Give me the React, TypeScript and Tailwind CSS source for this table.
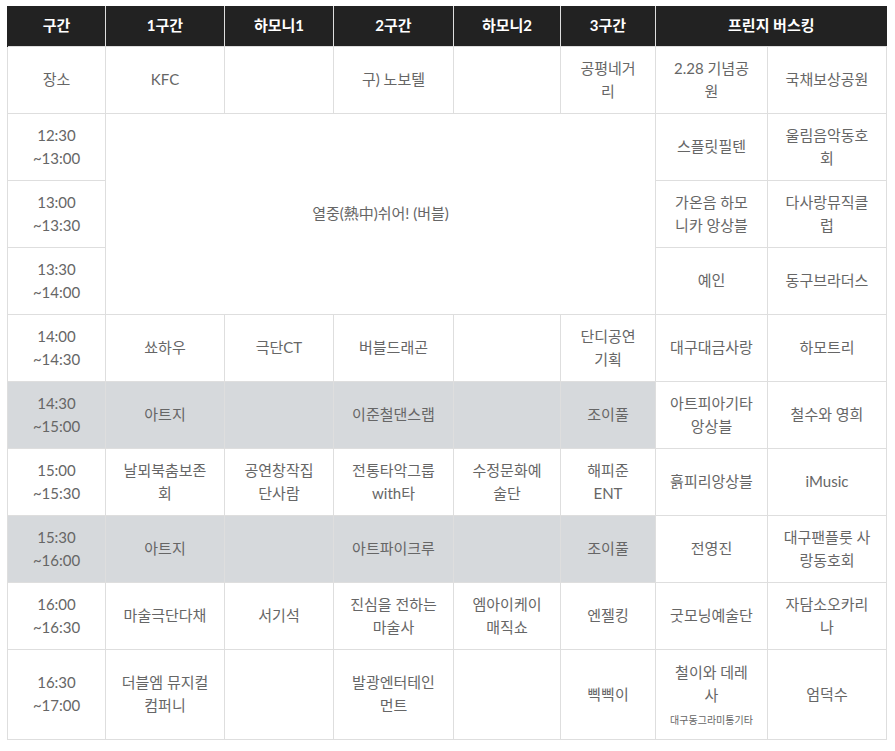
import React from "react";

type Cell = { text?: React.ReactNode; colSpan?: number; rowSpan?: number };
type Row = { time: React.ReactNode; gray?: boolean; main: Cell[]; fringe: [React.ReactNode, React.ReactNode] };

const rows: Row[] = [
  {
    time: "장소",
    main: [{ text: "KFC" }, { text: "" }, { text: "구) 노보텔" }, { text: "" }, { text: "공평네거리" }],
    fringe: ["2.28 기념공원", "국채보상공원"],
  },
  {
    time: <>12:30<br />~13:00</>,
    main: [{ text: "열중(熱中)쉬어! (버블)", colSpan: 5, rowSpan: 3 }],
    fringe: ["스플릿필텐", "울림음악동호회"],
  },
  { time: <>13:00<br />~13:30</>, main: [], fringe: ["가온음 하모니카 앙상블", "다사랑뮤직클럽"] },
  { time: <>13:30<br />~14:00</>, main: [], fringe: ["예인", "동구브라더스"] },
  {
    time: <>14:00<br />~14:30</>,
    main: [{ text: "쑈하우" }, { text: "극단CT" }, { text: "버블드래곤" }, { text: "" }, { text: "단디공연기획" }],
    fringe: ["대구대금사랑", "하모트리"],
  },
  {
    time: <>14:30<br />~15:00</>,
    gray: true,
    main: [{ text: "아트지" }, { text: "" }, { text: "이준철댄스랩" }, { text: "" }, { text: "조이풀" }],
    fringe: ["아트피아기타앙상블", "철수와 영희"],
  },
  {
    time: <>15:00<br />~15:30</>,
    main: [
      { text: "날뫼북춤보존회" },
      { text: "공연창작집단사람" },
      { text: "전통타악그룹 with타" },
      { text: "수정문화예술단" },
      { text: "해피준 ENT" },
    ],
    fringe: ["흙피리앙상블", "iMusic"],
  },
  {
    time: <>15:30<br />~16:00</>,
    gray: true,
    main: [{ text: "아트지" }, { text: "" }, { text: "아트파이크루" }, { text: "" }, { text: "조이풀" }],
    fringe: ["전영진", "대구팬플룻 사랑동호회"],
  },
  {
    time: <>16:00<br />~16:30</>,
    main: [
      { text: "마술극단다채" },
      { text: "서기석" },
      { text: "진심을 전하는 마술사" },
      { text: "엠아이케이 매직쇼" },
      { text: "엔젤킹" },
    ],
    fringe: ["굿모닝예술단", "자담소오카리나"],
  },
  {
    time: <>16:30<br />~17:00</>,
    main: [{ text: "더블엠 뮤지컬 컴퍼니" }, { text: "" }, { text: "발광엔터테인먼트" }, { text: "" }, { text: "삑삑이" }],
    fringe: [
      <>
        철이와 데레사
        <div className="text-[10px] leading-[16px] mt-[5px] whitespace-nowrap -mx-[10px]">대구동그라미통기타</div>
      </>,
      "엄덕수",
    ],
  },
];

const widths = [98, 119, 109, 120, 107, 95, 112, 119];
const heads = ["구간", "1구간", "하모니1", "2구간", "하모니2", "3구간"];

const td = "border border-[#dedede] text-center align-middle px-[14px] py-0";

export default function App() {
  return (
    <div
      className="w-[895px] h-[751px] bg-white pt-[6px] pl-[7px]"
      style={{ fontFamily: "Lato, 'Noto Sans CJK KR', sans-serif" }}
    >
      <table className="border-collapse table-fixed w-[879px] text-[15px] leading-[23px] text-[#666]">
        <colgroup>
          {widths.map((w, i) => (
            <col key={i} style={{ width: w }} />
          ))}
        </colgroup>
        <thead>
          <tr className="h-[40px] bg-[#222] text-white font-bold">
            {heads.map((h) => (
              <th key={h} className="border-x border-[#dedede] first:border-l-[#222] font-bold">
                {h}
              </th>
            ))}
            <th colSpan={2} className="border-l border-[#dedede] border-r-[#222] font-bold">
              프린지 버스킹
            </th>
          </tr>
        </thead>
        <tbody>
          {rows.map((r, i) => (
            <tr key={i} className={i === rows.length - 1 ? "h-[90px]" : "h-[67px]"}>
              <td className={`${td} ${r.gray ? "bg-[#d6d9dc]" : ""}`}>{r.time}</td>
              {r.main.map((c, j) => (
                <td
                  key={j}
                  colSpan={c.colSpan}
                  rowSpan={c.rowSpan}
                  className={`${td} ${r.gray ? "bg-[#d6d9dc]" : ""}`}
                >
                  {c.text}
                </td>
              ))}
              <td className={td}>{r.fringe[0]}</td>
              <td className={td}>{r.fringe[1]}</td>
            </tr>
          ))}
        </tbody>
      </table>
    </div>
  );
}
